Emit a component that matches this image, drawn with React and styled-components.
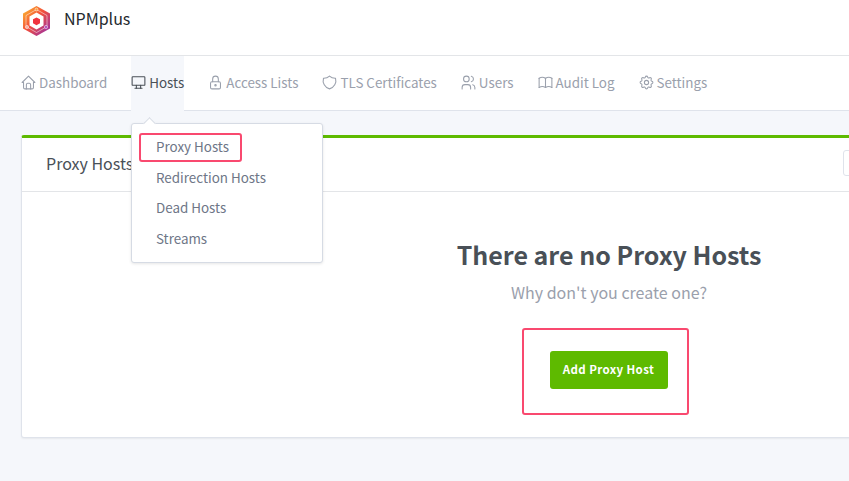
import React from "react";
import styled, { createGlobalStyle } from "styled-components";
import { TbHome, TbDeviceDesktop, TbLock, TbShield, TbUsers, TbBook, TbSettings } from "react-icons/tb";

const Global = createGlobalStyle`
  html, body { margin: 0; padding: 0; height: 100%; overflow: hidden; background: #f5f7fb; }
  body { font-family: "Noto Sans CJK SC", "Noto Sans", sans-serif; }
`;
const Page = styled.div`width: 1218px; height: 481px; background: #f5f7fb;`;
const TopBar = styled.header`
  box-sizing: border-box; height: 56px; background: #fff; border-bottom: 1px solid #e3e5e8;
  display: flex; align-items: flex-start; padding: 6px 0 0 23px; gap: 14px;
`;
const Logo = styled.svg`width: 27px; height: 30px; flex: none;`;
const Brand = styled.span`font-size: 16px; line-height: 24px; color: #24292e;`;
const Nav = styled.nav`
  height: 55px; box-sizing: border-box; background: #fff; border-bottom: 1px solid #dfe3eb;
  display: flex; align-items: stretch; gap: 24px; padding-left: 21px; position: relative;
`;
const Tab = styled.div`
  display: flex; align-items: center; font-size: 13.4px; margin-bottom: -1px; padding-bottom: 3px; box-sizing: border-box;
  color: ${p => (p.$active ? "#495057" : "#9aa0ac")};
  background: ${p => (p.$active ? "#f5f7fb" : "transparent")};
  svg { flex: none; margin: 0 2px 0 -1px; }
`;
const Dropdown = styled.div`
  position: absolute; left: 131px; top: 67px; width: 192px; height: 140px; box-sizing: border-box;
  background: #fff; border: 1px solid #d6dbe4; border-radius: 3px; box-shadow: 0 1px 3px rgba(0,0,0,.1);
  padding: 9px 7px; z-index: 5;
  &::before {
    content: ""; position: absolute; left: 13px; top: -5px; width: 8px; height: 8px; background: #fff;
    border-left: 1px solid #d6dbe4; border-top: 1px solid #d6dbe4; transform: rotate(45deg);
  }
`;
const MenuItem = styled.div`
  height: 30.5px; box-sizing: border-box; display: flex; align-items: center; width: fit-content;
  font-size: 13.4px; color: #6e7687; padding: 0 17px 3px;
  ${p => p.$ring && "border: 2px solid #f9496f; border-radius: 3px; height: 29px; margin-bottom: 1px; padding: 0 11px 4px 15px;"}
`;
const Main = styled.main`padding: 24px 21px 0;`;
const Card = styled.section`
  height: 303px; box-sizing: border-box; background: #fff; border: 1px solid #dfe3eb; border-top: 3px solid #5eba00;
  border-radius: 3px; box-shadow: 0 1px 2px rgba(0,0,0,.06); display: flex; flex-direction: column;
`;
const CardHead = styled.div`
  height: 54px; flex: none; box-sizing: border-box; border-bottom: 1px solid #e3e5e8;
  display: flex; align-items: center; justify-content: space-between; padding: 0 24px 4px;
`;
const CardTitle = styled.h2`margin: 0; font-size: 16px; font-weight: 400; color: #495057;`;
const HeadControl = styled.div`
  width: 200px; height: 26px; margin-right: 129px; box-sizing: border-box; border: 1px solid #dfe3eb; border-radius: 3px;
`;
const Empty = styled.div`display: flex; flex-direction: column; align-items: center; padding-top: 44px;`;
const Heading = styled.h1`margin: 0; font-size: 25px; line-height: 36px; font-weight: 700; color: #495057;`;
const Sub = styled.p`margin: 8px 0 0; font-size: 16px; line-height: 24px; color: #9aa0ac;`;
const Ring = styled.div`
  margin: 24px 8px 0 0; box-sizing: border-box; width: 167px; height: 87px; border: 2px solid #f9496f; border-radius: 3px;
  padding: 21px 0 0 26px;
`;
const AddButton = styled.button`
  display: block; width: 118px; height: 38px; background: #5eba00; border: 0; border-radius: 3px; color: #fff;
  font: 700 11.5px "Noto Sans CJK SC", sans-serif; letter-spacing: .4px; padding: 0 0 3px;
`;

const tabs = [
  ["Dashboard", TbHome], ["Hosts", TbDeviceDesktop, true], ["Access Lists", TbLock], ["TLS Certificates", TbShield],
  ["Users", TbUsers], ["Audit Log", TbBook], ["Settings", TbSettings],
];

export default function App() {
  return (
    <Page>
      <Global />
      <TopBar>
        <Logo viewBox="0 0 27 30">
          <defs>
            <linearGradient id="g" x1="0" y1="0" x2="1" y2="1">
              <stop offset="0" stopColor="#fdc52c" />
              <stop offset=".45" stopColor="#f4503a" />
              <stop offset="1" stopColor="#8d2bb5" />
            </linearGradient>
          </defs>
          <path d="M13.5 0 27 7.5v15L13.5 30 0 22.500v-15z" fill="url(#g)" />
          <path d="M13.500 3.500 24 9.500v11l-10.500 6-10.500-6v-11z" fill="none" stroke="#fff" strokeWidth=".7" opacity=".7" />
          <circle cx="4" cy="21" r="1.600" fill="#f4b0a0" stroke="#fff" strokeWidth=".5" />
          <circle cx="23" cy="21" r="1.600" fill="#b04ac0" stroke="#fff" strokeWidth=".5" />
          <circle cx="13.500" cy="3.500" r="1.400" fill="#f8a040" stroke="#fff" strokeWidth=".5" />
          <path d="M13.500 6.500 20.500 10.500v9l-7 4-7-4v-9z" fill="#fff" />
          <path d="M13.500 11.500 17 13.300v3.900l-3.500 2-3.500-2v-3.900z" fill="#f0343f" />
        </Logo>
        <Brand>NPMplus</Brand>
      </TopBar>
      <Nav>
        {tabs.map(([label, Icon, active]) => (
          <Tab key={label} $active={active}>
            <Icon size={17} strokeWidth={1.5} />
            {label}
          </Tab>
        ))}
        <Dropdown>
          <MenuItem $ring>Proxy Hosts</MenuItem>
          <MenuItem>Redirection Hosts</MenuItem>
          <MenuItem>Dead Hosts</MenuItem>
          <MenuItem>Streams</MenuItem>
        </Dropdown>
      </Nav>
      <Main>
        <Card>
          <CardHead>
            <CardTitle>Proxy Hosts</CardTitle>
            <HeadControl />
          </CardHead>
          <Empty>
            <Heading>There are no Proxy Hosts</Heading>
            <Sub>Why don't you create one?</Sub>
            <Ring><AddButton>Add Proxy Host</AddButton></Ring>
          </Empty>
        </Card>
      </Main>
    </Page>
  );
}
